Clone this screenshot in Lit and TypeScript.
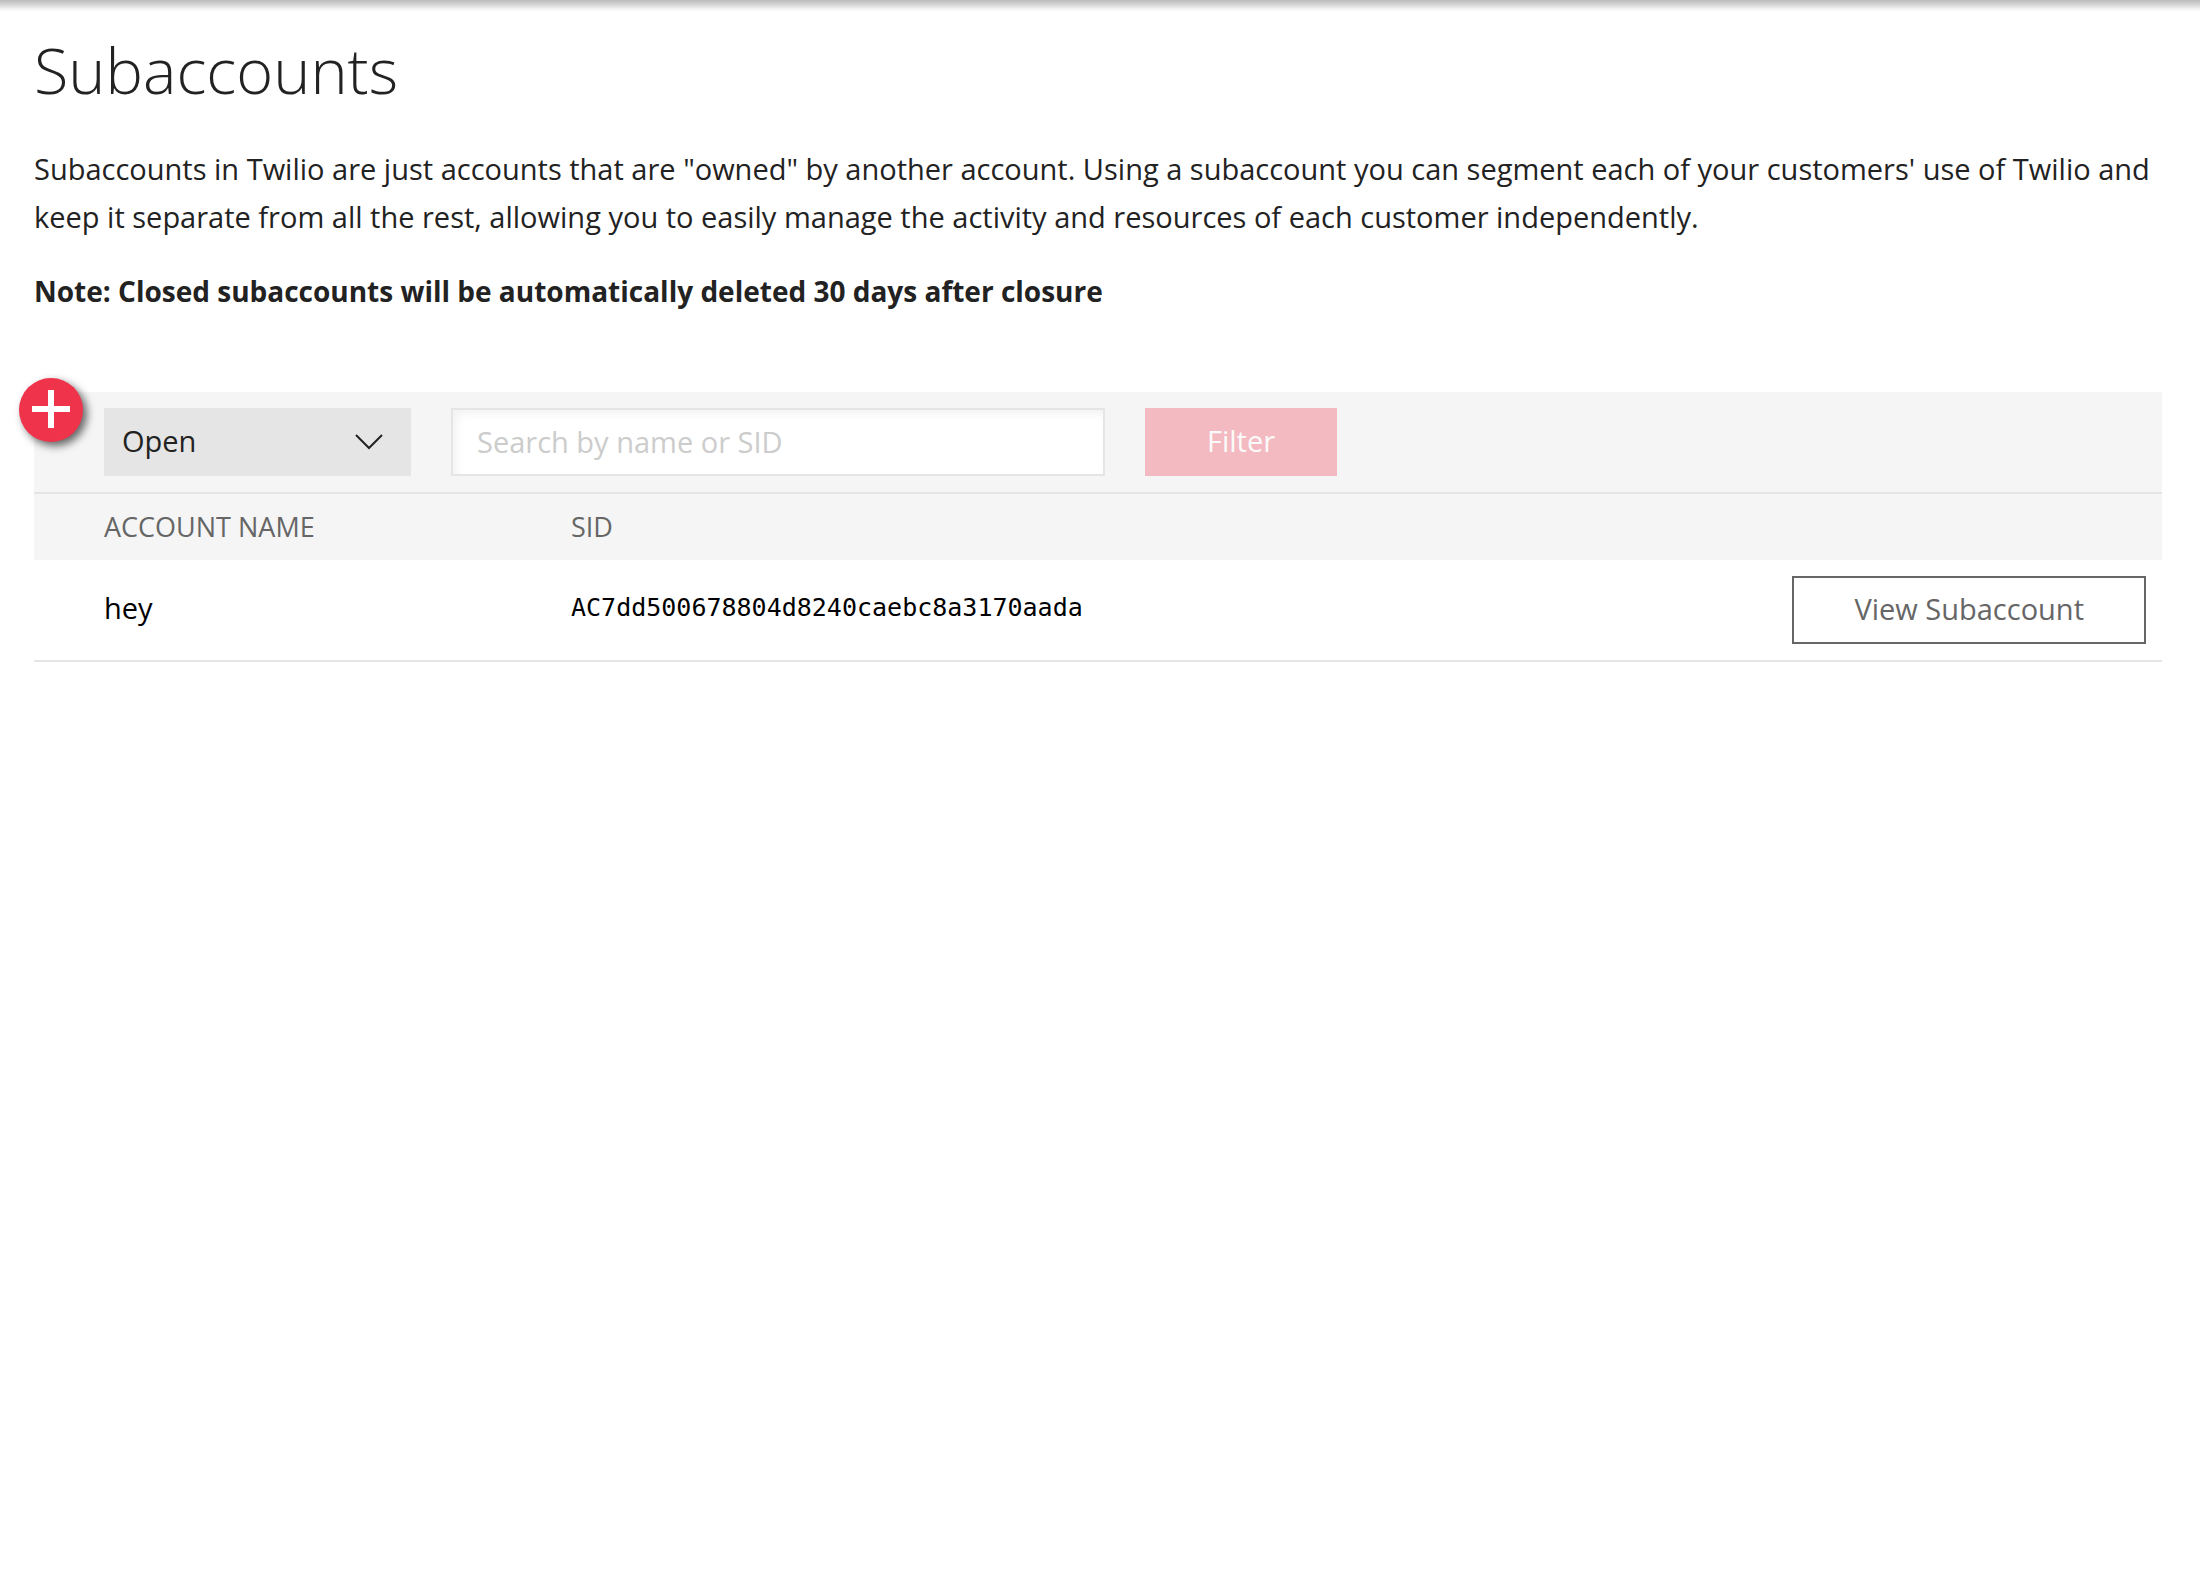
import { LitElement, html, css } from "lit";
import { customElement, state } from "lit/decorators.js";

interface Account {
  name: string;
  sid: string;
}

@customElement("app-root")
export class AppRoot extends LitElement {
  @state() private accounts: Account[] = [
    { name: "hey", sid: "AC7dd500678804d8240caebc8a3170aada" },
  ];

  @state() private query = "";

  static styles = css`
    :host {
      display: block;
      min-height: 100vh;
      background: #fff;
      color: #222;
      font-family: "Open Sans", "Noto Sans", sans-serif;
      font-size: 29px;
      line-height: 48px;
    }
    * {
      box-sizing: border-box;
    }
    .topbar-shadow {
      height: 12px;
      background: linear-gradient(#bcbcbc, #d2d2d2 35%, #f4f4f4 75%, #fff);
    }
    main {
      padding: 18px 38px 48px 34px;
    }
    h1 {
      margin: 0 0 35px;
      font-size: 63px;
      font-weight: 300;
      line-height: 80px;
    }
    p {
      margin: 0 0 26px;
    }
    .note {
      margin-bottom: 77px;
      font-size: 28px;
      font-weight: 700;
    }
    .panel {
      position: relative;
    }
    .add {
      position: absolute;
      top: -14px;
      left: -15px;
      width: 64px;
      height: 64px;
      padding: 0;
      border: 0;
      border-radius: 50%;
      background: #ef334b;
      box-shadow: 4px 4px 8px rgba(0, 0, 0, 0.6);
      cursor: pointer;
    }
    .add svg {
      display: block;
    }
    .toolbar {
      display: flex;
      align-items: center;
      gap: 40px;
      padding: 16px 16px 16px 70px;
      border-bottom: 2px solid #e5e5e5;
      background: #f5f5f5;
    }
    .picker {
      display: grid;
      align-items: center;
      width: 307px;
    }
    .picker > * {
      grid-area: 1 / 1;
    }
    .picker svg {
      justify-self: end;
      margin-right: 27px;
      pointer-events: none;
    }
    select,
    input,
    .button {
      height: 68px;
      margin: 0;
      border: 0;
      border-radius: 0;
      font: inherit;
    }
    select {
      appearance: none;
      width: 100%;
      padding: 0 60px 2px 18px;
      background: #e5e5e5;
      color: #222;
    }
    input {
      width: 654px;
      min-width: 0;
      padding: 0 24px 2px;
      border: 2px solid #e5e5e5;
      background: #fff;
      box-shadow: inset 4px 4px 8px rgba(0, 0, 0, 0.05);
      color: #222;
    }
    input::placeholder {
      color: #ccc;
      opacity: 1;
    }
    .button {
      padding: 0 60px 2px;
      cursor: pointer;
    }
    .filter {
      width: 192px;
      background: #ef334b;
      color: #fff;
    }
    .filter:disabled {
      background: #f4bac1;
      color: #fafafa;
      cursor: default;
    }
    .view {
      border: 2px solid #666;
      background: #fff;
      color: #666;
      white-space: nowrap;
    }
    table {
      width: 100%;
      border-collapse: separate;
      border-spacing: 0;
      table-layout: fixed;
    }
    th {
      height: 66px;
      padding: 0;
      background: #f5f5f5;
      color: #666;
      font-size: 27px;
      font-weight: 400;
      text-align: left;
      text-transform: uppercase;
    }
    td {
      padding: 14px 0 18px;
      border-bottom: 2px solid #e5e5e5;
      color: #000;
      line-height: 0;
    }
    .name {
      width: 537px;
      padding-left: 70px;
    }
    .sid {
      font-family: "DejaVu Sans Mono", "Liberation Mono", monospace;
      font-size: 25px;
    }
    .actions {
      width: 500px;
      padding: 16px 16px 16px 0;
      text-align: right;
    }
  `;

  private onSearch(e: Event) {
    this.query = (e.target as HTMLInputElement).value;
  }

  render() {
    return html`
      <div class="topbar-shadow"></div>
      <main>
        <h1>Subaccounts</h1>
        <p>
          Subaccounts in Twilio are just accounts that are "owned" by another
          account. Using a subaccount you can segment each of your customers'
          use of Twilio and keep it separate from all the rest, allowing you to
          easily manage the activity and resources of each customer
          independently.
        </p>
        <p class="note">
          Note: Closed subaccounts will be automatically deleted 30 days after
          closure
        </p>

        <section class="panel">
          <form class="toolbar" @submit=${(e: Event) => e.preventDefault()}>
            <div class="picker">
              <select aria-label="Status">
                <option>Open</option>
              </select>
              <svg width="30" height="18" viewBox="0 0 30 18" aria-hidden="true">
                <path
                  d="M2 2L15 15L28 2"
                  fill="none"
                  stroke="#222"
                  stroke-width="2"
                />
              </svg>
            </div>
            <input
              type="text"
              aria-label="Search by name or SID"
              placeholder="Search by name or SID"
              .value=${this.query}
              @input=${this.onSearch}
            />
            <button class="button filter" ?disabled=${!this.query}>
              Filter
            </button>
          </form>

          <table>
            <thead>
              <tr>
                <th class="name" scope="col">Account Name</th>
                <th scope="col">SID</th>
                <th class="actions" scope="col" aria-label="Actions"></th>
              </tr>
            </thead>
            <tbody>
              ${this.accounts.map(
                (a) => html`
                  <tr>
                    <td class="name">${a.name}</td>
                    <td class="sid">${a.sid}</td>
                    <td class="actions">
                      <button class="button view" type="button">
                        View Subaccount
                      </button>
                    </td>
                  </tr>
                `
              )}
            </tbody>
          </table>

          <button class="add" type="button" aria-label="Create subaccount">
            <svg width="64" height="64" viewBox="0 0 64 64" aria-hidden="true">
              <path d="M13 31H51M32 12V50" stroke="#fff" stroke-width="6" />
            </svg>
          </button>
        </section>
      </main>
    `;
  }
}
